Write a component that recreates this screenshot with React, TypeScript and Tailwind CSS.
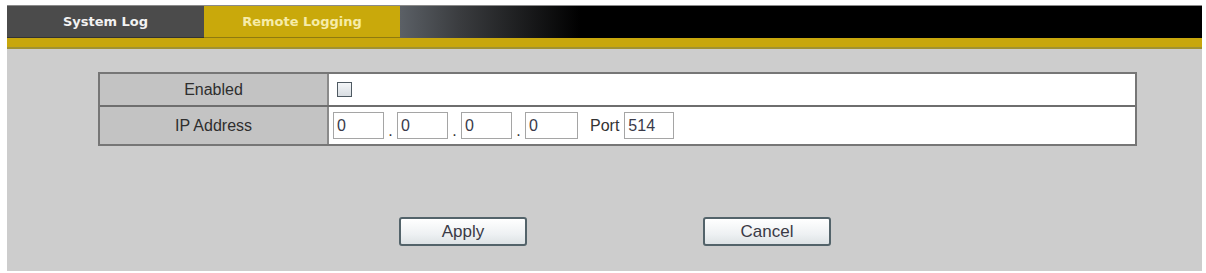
import * as React from 'react';

function IpBox({ value, w = 'w-[51px]' }: { value: string; w?: string }) {
  return (
    <div
      className={`${w} h-[27px] border border-[#a5a5a5] bg-white pl-[3px] flex items-center text-[16px] text-[#3a3a4a]`}
    >
      {value}
    </div>
  );
}

function Dot() {
  return <span className="w-[13px] text-center text-[16px] text-[#333] self-end pb-[5px] leading-none">.</span>;
}

function Button({ label }: { label: string }) {
  return (
    <button className="w-[128px] h-[29px] rounded-[3px] border-2 border-[#53636a] bg-[linear-gradient(to_bottom,#ffffff,#eef1f3_60%,#dde2e5)] text-[17px] text-[#3a3a46]">
      {label}
    </button>
  );
}

export default function App() {
  return (
    <div className="w-[1206px] h-[273px] bg-white pl-[7px] pr-[4px] pt-[5px] pb-[2px] font-['Liberation_Sans',Arial,sans-serif]">
      <div className="flex h-full flex-col">
        {/* tab bar */}
        <div className="flex h-[33px] border-t border-[#8a8a8a] bg-black font-['DejaVu_Sans',sans-serif]">
          <div className="flex w-[197px] items-center justify-center bg-[#4b4b4b] border-b border-[#333] text-[13px] font-bold text-[#f2f2f2]">
            System Log
          </div>
          <div className="flex w-[196px] items-center justify-center bg-[#c9a90b] border-b border-[#8e7a10] text-[13px] font-bold text-[#f6eca8]">
            Remote Logging
          </div>
          <div className="flex-1 bg-[linear-gradient(to_right,#5b6066,#3a3c3f_60px,#000_180px)]" />
        </div>
        <div className="h-[11px] bg-[#c8a70c] border-b-2 border-[#a09232]" />

        {/* content */}
        <div className="flex flex-1 flex-col bg-[#cdcdcd]">
          <div className="ml-[91px] mt-[23px] w-[1039px] border-2 border-[#767676] bg-white text-[16px] text-[#2e2e2e]">
            <div className="flex h-[33px] border-b-2 border-[#6e6e6e]">
              <div className="flex w-[229px] items-center justify-center border-r-2 border-[#8a8a8a] bg-[#c3c3c3]">
                Enabled
              </div>
              <div className="flex flex-1 items-center pl-[8px]">
                <span className="h-[15px] w-[15px] border border-[#4f5a62] bg-[linear-gradient(to_bottom,#f4f6f8,#d8dde2)]" />
              </div>
            </div>
            <div className="flex h-[37px]">
              <div className="flex w-[229px] items-center justify-center border-r-2 border-[#8a8a8a] bg-[#c3c3c3]">
                IP Address
              </div>
              <div className="flex flex-1 items-center pl-[4px]">
                <IpBox value="0" />
                <Dot />
                <IpBox value="0" />
                <Dot />
                <IpBox value="0" />
                <Dot />
                <IpBox value="0" w="w-[53px]" />
                <span className="ml-[12px] mr-[5px] text-[16px] text-[#333]">Port</span>
                <IpBox value="514" w="w-[50px]" />
              </div>
            </div>
          </div>

          <div className="ml-[392px] mt-[71px] flex gap-[176px]">
            <Button label="Apply" />
            <Button label="Cancel" />
          </div>
        </div>
      </div>
    </div>
  );
}
